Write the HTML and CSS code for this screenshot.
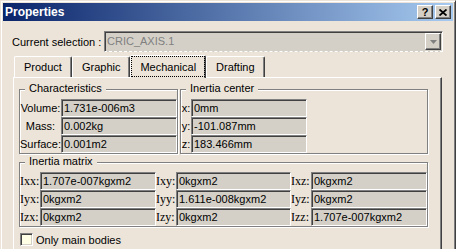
FILE: index.html
```html
<!DOCTYPE html>
<html lang="en">

<head>
    <meta charset="UTF-8">
    <title>Properties</title>
    <link rel="stylesheet" href="styles.css">
</head>

<body>
    <div class="window">
        <div class="titlebar">
            <span class="title">Properties</span>
            <div class="caption_buttons">
                <button class="caption_btn">?</button>
                <button class="caption_btn">
                    <svg width="8" height="7" viewBox="0 0 8 7">
                        <path d="M0.5 0.5L7.5 6.5M7.5 0.5L0.5 6.5" stroke="#000" stroke-width="1.8" fill="none" />
                    </svg>
                </button>
            </div>
        </div>
        <div class="content">
            <div class="selection">
                <span class="selection_label">Current selection :</span>
                <div class="combo">
                    <span class="combo_text">CRIC_AXIS.1</span>
                    <span class="combo_btn">
                        <svg width="7" height="4" viewBox="0 0 7 4">
                            <path d="M0 0H7L3.5 4Z" fill="#808080" />
                        </svg>
                    </span>
                </div>
            </div>
            <div class="tabs">
                <div class="tab">Product</div>
                <div class="tab">Graphic</div>
                <div class="tab active"><span class="focus">Mechanical</span></div>
                <div class="tab">Drafting</div>
            </div>
            <div class="panel">
                <div class="group_row">
                    <div class="group char">
                        <div class="group_title">Characteristics</div>
                        <div class="grid char_grid">
                            <span class="lbl">Volume:</span><span class="field">1.731e-006m3</span>
                            <span class="lbl">Mass:</span><span class="field">0.002kg</span>
                            <span class="lbl">Surface:</span><span class="field">0.001m2</span>
                        </div>
                    </div>
                    <div class="group center">
                        <div class="group_title">Inertia center</div>
                        <div class="grid center_grid">
                            <span class="lbl">x:</span><span class="field">0mm</span>
                            <span class="lbl">y:</span><span class="field">-101.087mm</span>
                            <span class="lbl">z:</span><span class="field">183.466mm</span>
                        </div>
                    </div>
                </div>
                <div class="group matrix">
                    <div class="group_title">Inertia matrix</div>
                    <div class="grid matrix_grid">
                        <span class="lbl mlbl">Ixx:</span><span class="field">1.707e-007kgxm2</span>
                        <span class="lbl mlbl">Ixy:</span><span class="field">0kgxm2</span>
                        <span class="lbl mlbl">Ixz:</span><span class="field">0kgxm2</span>
                        <span class="lbl mlbl">Iyx:</span><span class="field">0kgxm2</span>
                        <span class="lbl mlbl">Iyy:</span><span class="field">1.611e-008kgxm2</span>
                        <span class="lbl mlbl">Iyz:</span><span class="field">0kgxm2</span>
                        <span class="lbl mlbl">Izx:</span><span class="field">0kgxm2</span>
                        <span class="lbl mlbl">Izy:</span><span class="field">0kgxm2</span>
                        <span class="lbl mlbl">Izz:</span><span class="field">1.707e-007kgxm2</span>
                    </div>
                </div>
                <label class="check">
                    <span class="checkbox"></span>
                    <span>Only main bodies</span>
                </label>
            </div>
        </div>
    </div>
</body>

</html>
```

FILE: styles.css
```css
html, body {
    margin: 0;
    padding: 0;
    height: 249px;
    overflow: hidden;
}

body {
    background-color: #ece4d8;
    font-family: "Liberation Sans", Arial, sans-serif;
    font-size: 11px;
    color: #000;
}

.window {
    width: 456px;
    height: 249px;
    box-sizing: border-box;
    display: flex;
    flex-direction: column;
    padding: 2px 2px 0 2px;
    border: 1px solid;
    border-bottom: 0;
    border-color: #ece4d8 #404040 #404040 #ece4d8;
    box-shadow: inset 1px 1px 0 #fff, inset -1px 0 0 #808080;
}

/* title bar */
.titlebar {
    height: 18px;
    flex: none;
    display: flex;
    align-items: center;
    justify-content: space-between;
    padding: 0 2px 0 2px;
    background: linear-gradient(to right, #0a246a, #a6caf0);
}

.title {
    color: #fff;
    font-weight: bold;
    font-size: 12px;
}

.caption_buttons {
    display: flex;
    gap: 2px;
}

.caption_btn {
    width: 16px;
    height: 14px;
    box-sizing: border-box;
    padding: 0;
    margin: 0;
    display: flex;
    align-items: center;
    justify-content: center;
    font-family: "Liberation Sans", Arial, sans-serif;
    font-weight: bold;
    font-size: 11px;
    line-height: 12px;
    color: #000;
    background-color: #d4d0c8;
    border: 1px solid;
    border-color: #fff #404040 #404040 #fff;
    box-shadow: inset -1px -1px 0 #808080;
}

.content {
    flex: 1;
    display: flex;
    flex-direction: column;
    min-height: 0;
    padding: 10px 10px 0 9px;
}

/* current selection */
.selection {
    display: flex;
    align-items: center;
    height: 21px;
    flex: none;
}

.selection_label {
    flex: none;
    width: 92px;
}

.combo {
    flex: 1;
    height: 21px;
    box-sizing: border-box;
    display: flex;
    padding: 1px;
    background-color: #d4d0c8;
    border: 1px solid;
    border-color: #808080 #fff #fff #808080;
    border-bottom-style: dashed;
    box-shadow: inset 1px 1px 0 #404040, inset -1px -1px 0 #d4d0c8;
}

.combo_text {
    flex: 1;
    padding-left: 1px;
    line-height: 17px;
    color: #808080;
}

.combo_btn {
    width: 16px;
    box-sizing: border-box;
    display: flex;
    align-items: center;
    justify-content: center;
    background-color: #d4d0c8;
    border: 1px solid;
    border-color: #fff #404040 #404040 #fff;
    box-shadow: inset -1px -1px 0 #808080;
}

/* tabs */
.tabs {
    display: flex;
    align-items: flex-end;
    flex: none;
    height: 22px;
    margin-top: 3px;
    padding-left: 2px;
}

.tab {
    height: 21px;
    box-sizing: border-box;
    display: flex;
    align-items: center;
    padding: 0 9px;
    border-top: 1px solid #fff;
    border-left: 1px solid #fff;
    border-right: 1px solid #404040;
    border-radius: 2px 2px 0 0;
    box-shadow: inset -1px 0 0 #808080;
}

.tab.active {
    position: relative;
    height: 23px;
    margin-bottom: -1px;
    padding: 0 0 1px 0;
    align-items: stretch;
    background-color: #ece4d8;
}

.tab .focus {
    display: flex;
    align-items: center;
    padding: 0 8px;
    border: 1px dotted #000;
}

/* panel */
.panel {
    flex: 1;
    min-height: 0;
    overflow: hidden;
    margin: 0 1px;
    padding: 11px 13px 0 5px;
    border-top: 1px solid #fff;
    border-left: 1px solid #fff;
    border-right: 1px solid #404040;
    box-shadow: inset -1px 0 0 #808080;
}

.group_row {
    display: flex;
    gap: 2px;
}

.group {
    box-sizing: border-box;
    border: 1px solid #808080;
    box-shadow: 1px 1px 0 #fff, inset 1px 1px 0 #fff;
}

.group.char {
    width: 159px;
}

.group.center {
    flex: 1;
}

.group.matrix {
    margin-top: 8px;
}

.group_title {
    width: max-content;
    margin: -8px 0 4px 5px;
    padding: 0 4px;
    line-height: 13px;
    background-color: #ece4d8;
}

.grid {
    display: grid;
    grid-auto-rows: 18px;
}

.char_grid {
    grid-template-columns: 41px 116px;
}

.center_grid {
    grid-template-columns: 10px 116px;
}

.matrix_grid {
    grid-template-columns: 20px 116px 20px 115px 20px 116px;
}

.lbl {
    line-height: 18px;
    text-align: center;
    white-space: nowrap;
}

.mlbl {
    font-family: "Liberation Serif", "Times New Roman", serif;
    font-size: 12px;
    text-align: left;
}

.field {
    height: 18px;
    box-sizing: border-box;
    padding: 0 2px;
    line-height: 16px;
    white-space: nowrap;
    overflow: hidden;
    background-color: #d4d0c8;
    border: 1px solid;
    border-color: #808080 #fff #fff #808080;
    box-shadow: inset 1px 1px 0 #404040, inset -1px -1px 0 #d4d0c8;
}

/* checkbox */
.check {
    display: flex;
    align-items: center;
    gap: 3px;
    margin: 6px 0 0 1px;
}

.checkbox {
    width: 13px;
    height: 13px;
    box-sizing: border-box;
    background-color: #ffffe6;
    border: 1px solid;
    border-color: #808080 #fff #fff #808080;
    box-shadow: inset 1px 1px 0 #404040, inset -1px -1px 0 #d4d0c8;
}
```
